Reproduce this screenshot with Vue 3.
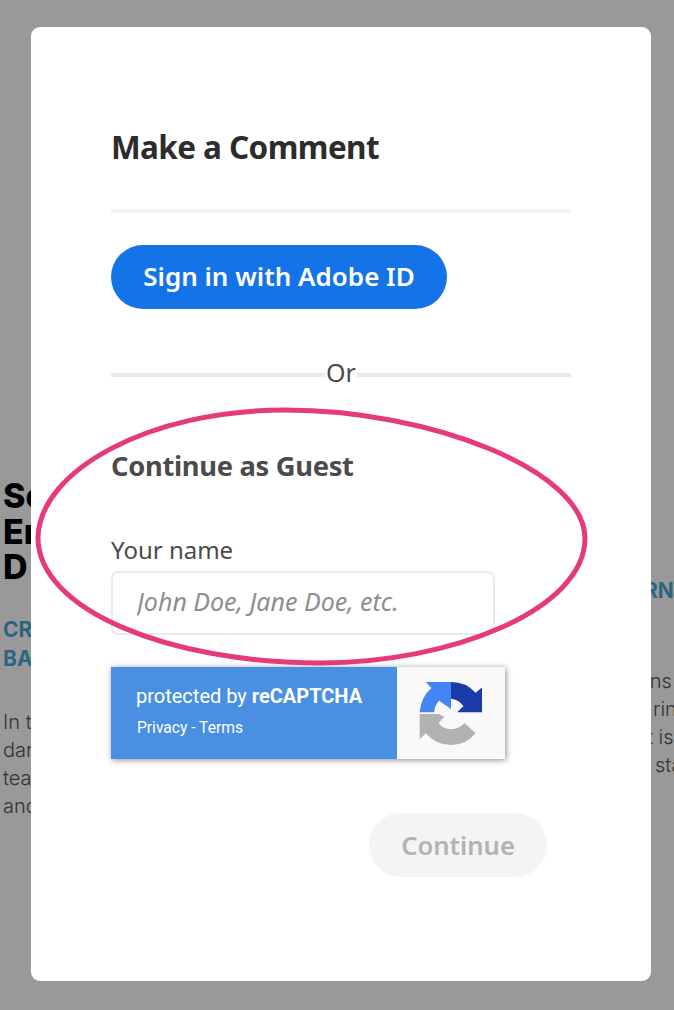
<template>
  <div class="page">
    <div class="behind behind-left">
      <div class="headline">Se<br />En<br />D</div>
      <div class="kicker">CR<br />BA</div>
      <div class="body-copy">In t<br />dar<br />tea<br />and</div>
    </div>
    <div class="behind behind-right">
      <div class="kicker kicker-right">RN</div>
      <div class="body-copy right-copy">
        <div class="indent-1">ons</div>
        <div class="indent-2">rin</div>
        <div class="indent-3">t is</div>
        <div class="indent-4">sta</div>
      </div>
    </div>

    <div class="modal">
      <h2 class="title">Make a Comment</h2>
      <div class="divider"></div>
      <button class="signin">Sign in with Adobe ID</button>
      <div class="or-row"><span>Or</span></div>
      <h3 class="guest">Continue as Guest</h3>
      <label class="name-label" for="guest-name">Your name</label>
      <input id="guest-name" class="name-input" type="text" placeholder="John Doe, Jane Doe, etc." />
      <div class="recaptcha">
        <div class="recaptcha-text">
          <div class="protected">protected by <b>reCAPTCHA</b></div>
          <div class="links">Privacy - Terms</div>
        </div>
        <div class="recaptcha-logo">
          <svg width="64" height="64" viewBox="90 65 190 190">
            <path d="M185 68L110 68L127 86Q96 112 92 158L135 158Q137 136 150 124L185 148Z" fill="#4285f4" />
            <path d="M185 68Q230 68 258 100L277 84L277 158L203 158L222 140Q208 120 185 118Z" fill="#1c3aa9" />
            <path d="M92 163L92 238L110 220Q140 255 185 255Q230 255 258 220L225 190Q210 208 185 208Q160 208 148 190L165 172L150 163Z" fill="#b2b2b2" />
          </svg>
        </div>
      </div>
      <div class="actions">
        <button class="continue" disabled>Continue</button>
      </div>
    </div>

    <svg class="circle" width="674" height="1010" viewBox="0 0 674 1010">
      <path d="M38 537C40 470 150 410 285 410C430 410 584 470 585 538C585 610 450 663 320 663C170 663 37 610 38 537Z" />
    </svg>
  </div>
</template>

<script setup>
</script>

<style>
html,
body {
  margin: 0;
  background: #999;
}
</style>

<style scoped>
.page {
  position: relative;
  width: 674px;
  height: 1010px;
  padding: 27px 0 0 31px;
  box-sizing: border-box;
  background: #999;
  overflow: hidden;
  font-family: "Noto Sans", "Open Sans", sans-serif;
}

.behind {
  position: absolute;
  white-space: nowrap;
  font-family: Inter, sans-serif;
}

.behind-left {
  left: 3px;
  top: 478px;
}

.behind-right {
  left: 590px;
  top: 576px;
}

.headline {
  font-size: 34px;
  line-height: 35.5px;
  font-weight: 800;
  color: #000;
}

.kicker {
  margin-top: 30px;
  font-size: 21px;
  line-height: 29px;
  font-weight: 700;
  color: #2b6581;
}

.kicker-right {
  margin-top: 0;
  margin-left: 54px;
}

.body-copy {
  margin-top: 35px;
  font-size: 20px;
  line-height: 28px;
  font-weight: 300;
  color: #333;
}

.right-copy {
  margin-top: 62px;
}

.indent-1 {
  margin-left: 48px;
}

.indent-2 {
  margin-left: 63px;
}

.indent-3 {
  margin-left: 57px;
}

.indent-4 {
  margin-left: 65px;
}

.modal {
  position: relative;
  width: 620px;
  height: 954px;
  padding: 100px 80px 0;
  box-sizing: border-box;
  background: #fff;
  border-radius: 9px;
}

.title {
  margin: 0;
  font-size: 31.5px;
  line-height: 40px;
  font-weight: 700;
  letter-spacing: -0.6px;
  color: #2c2c2c;
}

.divider {
  height: 4px;
  margin-top: 42px;
  background: #f4f4f4;
}

.signin {
  display: block;
  width: 336px;
  height: 64px;
  margin-top: 32px;
  padding: 0 0 2px;
  border: none;
  border-radius: 32px;
  background: #1473e6;
  color: #fff;
  font-family: inherit;
  font-size: 26px;
  font-weight: 600;
}

.or-row {
  position: relative;
  height: 40px;
  margin-top: 44px;
  text-align: center;
  font-size: 25px;
  line-height: 38px;
  color: #4b4b4b;
}

.or-row::before {
  content: "";
  position: absolute;
  left: 0;
  right: 0;
  top: 20px;
  height: 4px;
  background: #eaeaea;
}

.or-row span {
  position: relative;
  padding: 0 1px;
  background: linear-gradient(#fff, #fff) center / 100% 100% no-repeat;
}

.guest {
  margin: 53px 0 0;
  font-size: 27.3px;
  line-height: 40px;
  font-weight: 700;
  letter-spacing: -0.3px;
  color: #4b4b4b;
}

.name-label {
  display: block;
  margin-top: 46px;
  font-size: 24px;
  line-height: 36px;
  color: #4b4b4b;
}

.name-input {
  display: block;
  width: 384px;
  height: 64px;
  margin-top: 3px;
  padding: 0 24px 5px;
  box-sizing: border-box;
  border: 2px solid #eaeaea;
  border-radius: 7px;
  outline: none;
  background: #fff;
  font-family: inherit;
  font-size: 25px;
  font-style: italic;
}

.name-input::placeholder {
  color: #8e8e8e;
  opacity: 1;
}

.recaptcha {
  display: flex;
  width: 394px;
  height: 92px;
  margin-top: 32px;
  box-shadow: 1px 1px 6px rgba(0, 0, 0, 0.45);
  font-family: Roboto, sans-serif;
}

.recaptcha-text {
  width: 286px;
  padding: 17px 0 0 25px;
  box-sizing: border-box;
  background: #4a90e2;
  color: #fff;
}

.protected {
  font-size: 20px;
  line-height: 24px;
}

.links {
  margin-top: 10px;
  margin-left: 1px;
  font-size: 15.6px;
  line-height: 20px;
}

.recaptcha-logo {
  display: flex;
  flex: 1;
  align-items: center;
  justify-content: center;
  background: #f9f9f9;
}

.actions {
  display: flex;
  justify-content: flex-end;
  width: 436px;
  margin-top: 54px;
}

.continue {
  width: 178px;
  height: 64px;
  padding: 0;
  border: none;
  border-radius: 32px;
  background: #f4f4f4;
  color: #b3b3b3;
  font-family: inherit;
  font-size: 25.6px;
  font-weight: 600;
}

.circle {
  position: absolute;
  left: 0;
  top: 0;
  pointer-events: none;
}

.circle path {
  fill: none;
  stroke: #e53a7b;
  stroke-width: 5;
}
</style>
